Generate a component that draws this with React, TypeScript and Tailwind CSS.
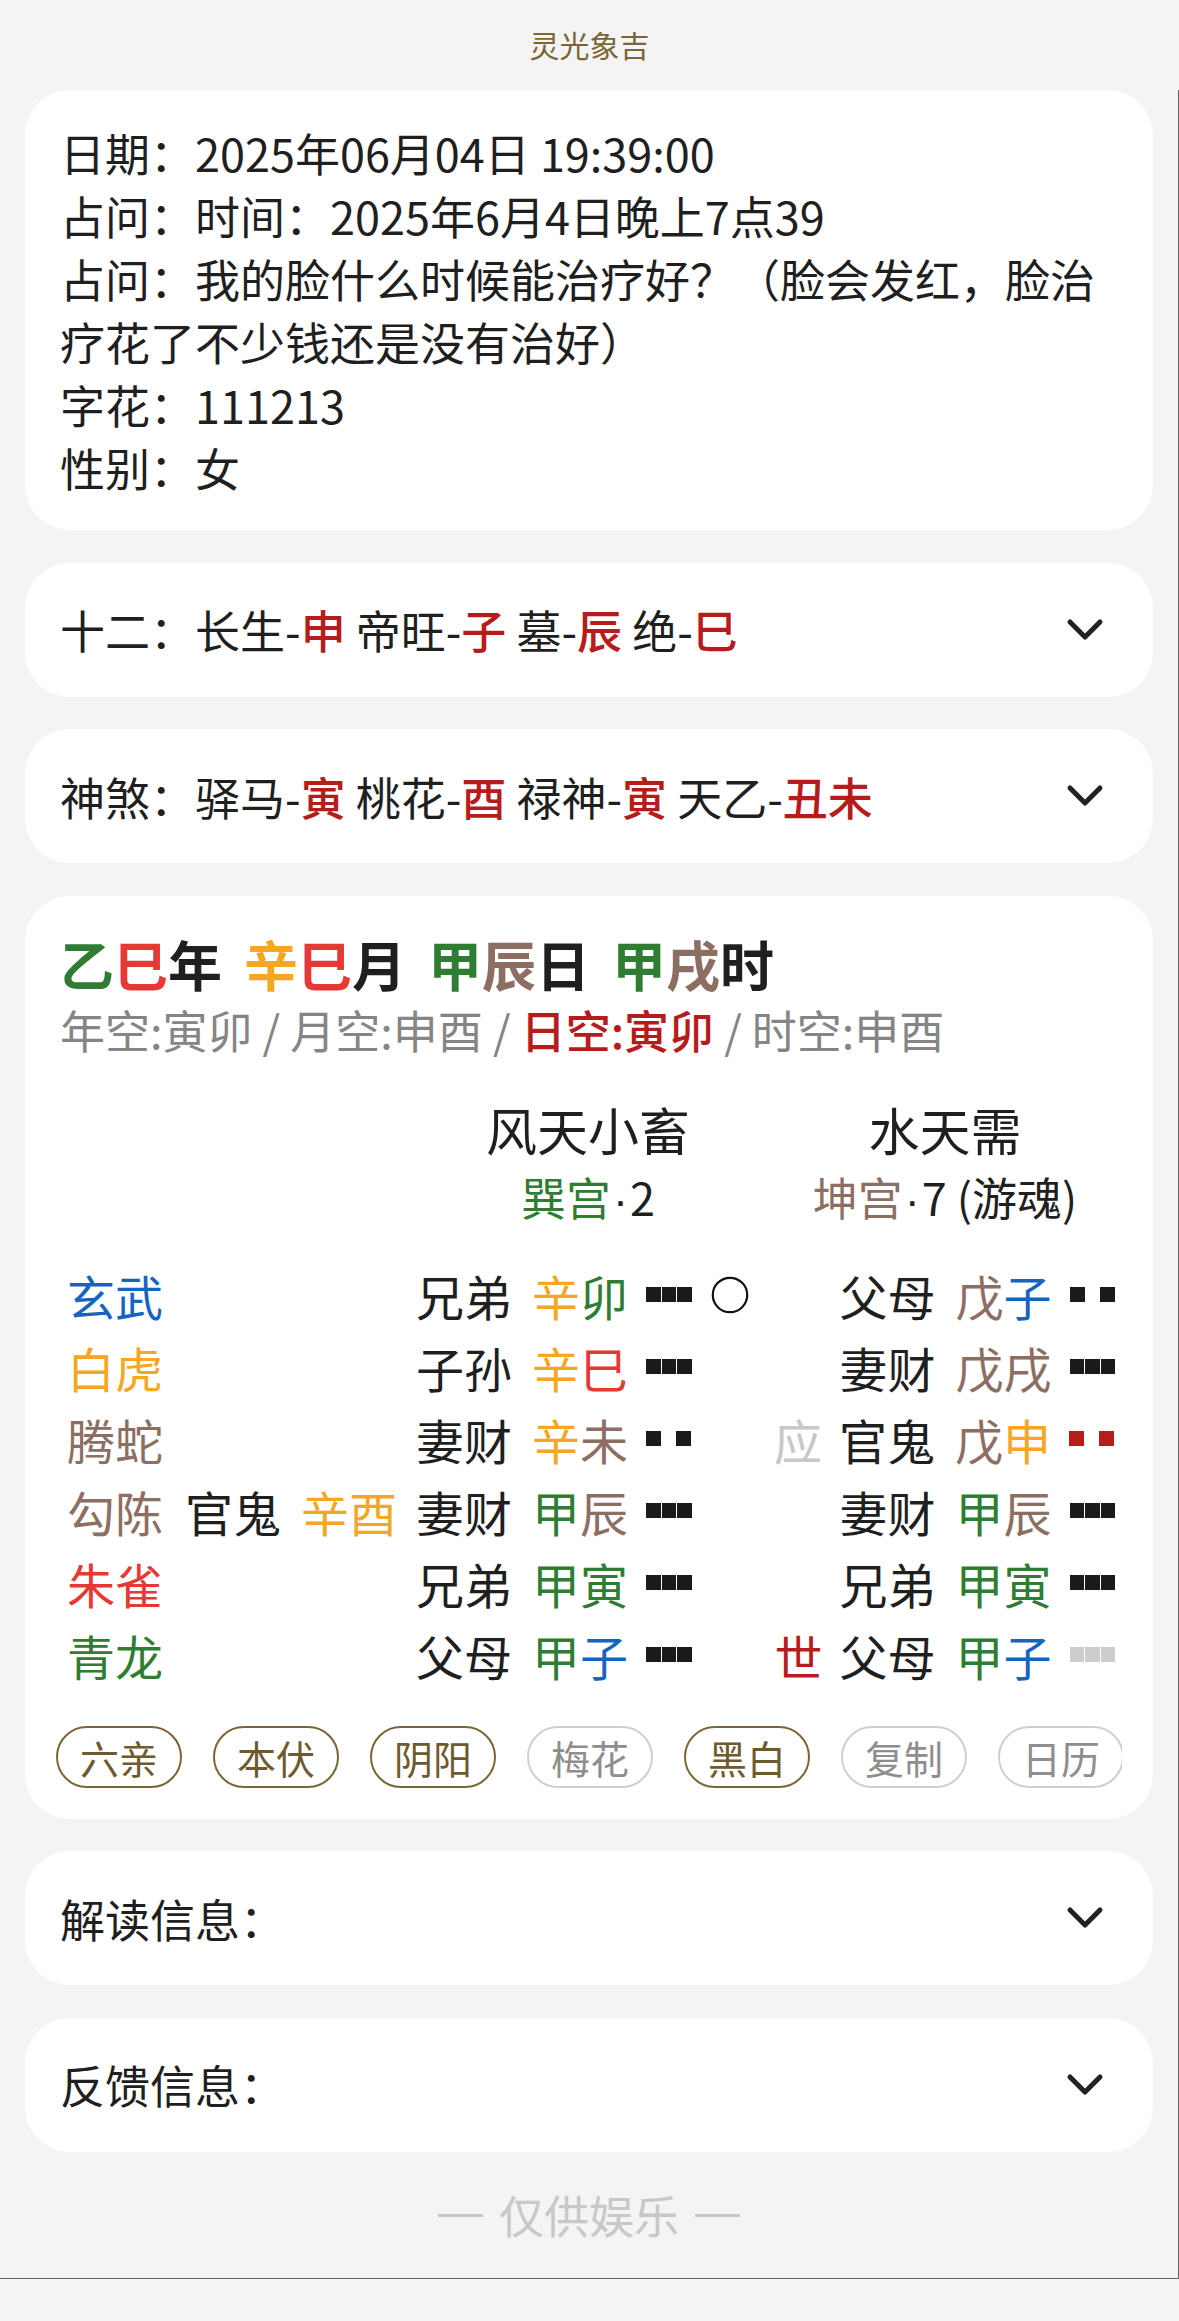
import React from "react";

const GREEN = "text-[#2e7d32]";
const RED = "text-[#e53935]";
const DRED = "text-[#b71c1c]";
const ORANGE = "text-[#f5a623]";
const BROWN = "text-[#8d6e63]";
const BLUE = "text-[#1565c0]";
const BLACK = "text-[#1f1f1f]";
const LGRAY = "text-[#c8c8c8]";

type Ch = [string, string];

function Chevron() {
  return (
    <svg width="38" height="24" viewBox="0 0 38 24" className="mr-[14px] shrink-0">
      <path d="M4 4 L19 19 L34 4" fill="none" stroke="#222" strokeWidth="5" strokeLinecap="round" strokeLinejoin="round" />
    </svg>
  );
}

function Yao({ yang, color }: { yang: boolean; color: string }) {
  if (yang) {
    return (
      <span className="ml-[18px] flex gap-[1px] shrink-0">
        <span className={"w-[14.5px] h-[15px] " + color} />
        <span className={"w-[14.5px] h-[15px] " + color} />
        <span className={"w-[14.5px] h-[15px] " + color} />
      </span>
    );
  }
  return (
    <span className="ml-[18px] flex gap-[15px] shrink-0">
      <span className={"w-[15px] h-[15px] " + color} />
      <span className={"w-[15px] h-[15px] " + color} />
    </span>
  );
}

function Pair({ rel, gz }: { rel: string; gz: Ch[] }) {
  return (
    <span className="flex shrink-0">
      <span className="w-[96px] text-[#1f1f1f]">{rel}</span>
      <span className="ml-[20px] w-[96px] flex">
        {gz.map((c, i) => (
          <span key={i} className={c[1]}>
            {c[0]}
          </span>
        ))}
      </span>
    </span>
  );
}

type Row = {
  god: string;
  godColor: string;
  fu?: { rel: string; gz: Ch[] };
  main: { rel: string; gz: Ch[]; yang: boolean; color: string };
  moving?: boolean;
  sy?: { t: string; c: string };
  bian: { rel: string; gz: Ch[]; yang: boolean; color: string };
};

const YB = "bg-[#1a1a1a]";
const YR = "bg-[#b71c1c]";
const YG = "bg-[#cccccc]";

const rows: Row[] = [
  {
    god: "玄武",
    godColor: BLUE,
    main: { rel: "兄弟", gz: [["辛", ORANGE], ["卯", GREEN]], yang: true, color: YB },
    moving: true,
    bian: { rel: "父母", gz: [["戊", BROWN], ["子", BLUE]], yang: false, color: YB },
  },
  {
    god: "白虎",
    godColor: ORANGE,
    main: { rel: "子孙", gz: [["辛", ORANGE], ["巳", RED]], yang: true, color: YB },
    bian: { rel: "妻财", gz: [["戊", BROWN], ["戌", BROWN]], yang: true, color: YB },
  },
  {
    god: "腾蛇",
    godColor: BROWN,
    main: { rel: "妻财", gz: [["辛", ORANGE], ["未", BROWN]], yang: false, color: YB },
    sy: { t: "应", c: LGRAY },
    bian: { rel: "官鬼", gz: [["戊", BROWN], ["申", ORANGE]], yang: false, color: YR },
  },
  {
    god: "勾陈",
    godColor: BROWN,
    fu: { rel: "官鬼", gz: [["辛", ORANGE], ["酉", ORANGE]] },
    main: { rel: "妻财", gz: [["甲", GREEN], ["辰", BROWN]], yang: true, color: YB },
    bian: { rel: "妻财", gz: [["甲", GREEN], ["辰", BROWN]], yang: true, color: YB },
  },
  {
    god: "朱雀",
    godColor: RED,
    main: { rel: "兄弟", gz: [["甲", GREEN], ["寅", GREEN]], yang: true, color: YB },
    bian: { rel: "兄弟", gz: [["甲", GREEN], ["寅", GREEN]], yang: true, color: YB },
  },
  {
    god: "青龙",
    godColor: GREEN,
    main: { rel: "父母", gz: [["甲", GREEN], ["子", BLUE]], yang: true, color: YB },
    sy: { t: "世", c: DRED },
    bian: { rel: "父母", gz: [["甲", GREEN], ["子", BLUE]], yang: true, color: YG },
  },
];

const buttons: { t: string; active: boolean }[] = [
  { t: "六亲", active: true },
  { t: "本伏", active: true },
  { t: "阴阳", active: true },
  { t: "梅花", active: false },
  { t: "黑白", active: true },
  { t: "复制", active: false },
  { t: "日历", active: false },
];

function CollapseCard({ children }: { children: React.ReactNode }) {
  return (
    <div className="bg-white rounded-[45px] h-[134px] pl-[35px] pr-[35px] flex items-center justify-between">
      <div className="text-[45px] leading-[63px] text-[#1f1f1f] whitespace-nowrap">{children}</div>
      <Chevron />
    </div>
  );
}

function R({ children }: { children: React.ReactNode }) {
  return <span className="text-[#b71c1c] font-medium">{children}</span>;
}

export default function App() {
  return (
    <div className="w-[1179px] min-h-[2321px] bg-[#f4f4f4] font-['Noto_Sans_CJK_SC',sans-serif] text-[#1f1f1f]">
      <div className="h-[90px] pt-[26px] text-center text-[30px] leading-[36px] text-[#7b6535]">灵光象吉</div>
      <div className="border-r border-b border-[#666666]">
        <div className="px-[25px] flex flex-col gap-[32.5px]">
          {/* Card 1 */}
          <div className="bg-white rounded-[45px] pt-[31px] pb-[31px] pl-[35px] pr-[35px] text-[45px] leading-[63px] text-[#1f1f1f]">
            <div>日期：2025年06月04日 19:39:00</div>
            <div>占问：时间：2025年6月4日晚上7点39</div>
            <div>占问：我的脸什么时候能治疗好？（脸会发红，脸治疗花了不少钱还是没有治好）</div>
            <div>字花：111213</div>
            <div>性别：女</div>
          </div>

          <CollapseCard>
            十二：长生-<R>申</R> 帝旺-<R>子</R> 墓-<R>辰</R> 绝-<R>巳</R>
          </CollapseCard>

          <CollapseCard>
            神煞：驿马-<R>寅</R> 桃花-<R>酉</R> 禄神-<R>寅</R> 天乙-<R>丑未</R>
          </CollapseCard>

          {/* Card 4 */}
          <div className="bg-white rounded-[45px] pt-[34px] pb-[31px] pl-[35px] pr-[35px]">
            <div className="flex gap-[22px] text-[54px] leading-[68px] font-bold whitespace-nowrap">
              <span>
                <span className={GREEN}>乙</span>
                <span className={RED}>巳</span>
                <span className={BLACK}>年</span>
              </span>
              <span>
                <span className={ORANGE}>辛</span>
                <span className={RED}>巳</span>
                <span className={BLACK}>月</span>
              </span>
              <span>
                <span className={GREEN}>甲</span>
                <span className={BROWN}>辰</span>
                <span className={BLACK}>日</span>
              </span>
              <span>
                <span className={GREEN}>甲</span>
                <span className={BROWN}>戌</span>
                <span className={BLACK}>时</span>
              </span>
            </div>
            <div className="text-[45px] leading-[64px] text-[#858585] whitespace-nowrap">
              年空:寅卯 / 月空:申酉 / <span className="text-[#b71c1c] font-medium">日空:寅卯</span> / 时空:申酉
            </div>

            <div className="mt-[37px] flex text-[51px] leading-[60px] text-[#1f1f1f]">
              <div className="w-[356px] shrink-0" />
              <div className="w-[344px] shrink-0 text-center">风天小畜</div>
              <div className="ml-[15px] w-[340px] shrink-0 text-center">水天需</div>
            </div>
            <div className="mt-[11px] flex text-[45px] leading-[54px] text-[#1f1f1f]">
              <div className="w-[356px] shrink-0" />
              <div className="w-[344px] shrink-0 text-center">
                <span className={GREEN}>巽宫</span>
                <span className="font-['Liberation_Sans',sans-serif] px-[2px]">·</span>2
              </div>
              <div className="ml-[15px] w-[340px] shrink-0 text-center">
                <span className={BROWN}>坤宫</span>
                <span className="font-['Liberation_Sans',sans-serif] px-[2px]">·</span>7 (游魂)
              </div>
            </div>

            <div className="mt-[31px] flex flex-col">
              {rows.map((r, i) => (
                <div key={i} className="flex items-center h-[72px] text-[48px] leading-[72px] whitespace-nowrap">
                  <div className="w-[125px] pl-[7px] shrink-0">
                    <span className={r.godColor}>{r.god}</span>
                  </div>
                  <div className="w-[231px] shrink-0 flex">{r.fu && <Pair rel={r.fu.rel} gz={r.fu.gz} />}</div>
                  <Pair rel={r.main.rel} gz={r.main.gz} />
                  <Yao yang={r.main.yang} color={r.main.color} />
                  <div className="ml-[19px] w-[38px] h-[38px] shrink-0 flex items-center justify-center">
                    {r.moving && (
                      <svg width="38" height="38" viewBox="0 0 38 38">
                        <circle cx="19" cy="19" r="17.2" fill="none" stroke="#111" strokeWidth="2.2" />
                      </svg>
                    )}
                  </div>
                  <div className="ml-[26px] w-[48px] shrink-0">
                    {r.sy && <span className={r.sy.c}>{r.sy.t}</span>}
                  </div>
                  <div className="ml-[17px] flex items-center">
                    <Pair rel={r.bian.rel} gz={r.bian.gz} />
                    <Yao yang={r.bian.yang} color={r.bian.color} />
                  </div>
                </div>
              ))}
            </div>

            <div className="mt-[35px] -mx-[4px] overflow-hidden">
              <div className="flex gap-[31px]">
                {buttons.map((b) =>
                  b.active ? (
                    <div
                      key={b.t}
                      className="w-[126px] h-[62px] shrink-0 rounded-full border-[2.5px] border-[#7b6535] text-[#6e5a2e] text-[39px] leading-[56px] flex items-center justify-center"
                    >
                      {b.t}
                    </div>
                  ) : (
                    <div
                      key={b.t}
                      className="w-[126px] h-[62px] shrink-0 rounded-full border-[2.5px] border-[#cfcfcf] text-[#8e8e8e] text-[39px] leading-[56px] flex items-center justify-center"
                    >
                      {b.t}
                    </div>
                  )
                )}
              </div>
            </div>
          </div>

          <CollapseCard>解读信息：</CollapseCard>
          <CollapseCard>反馈信息：</CollapseCard>
        </div>
        <div className="pt-[38.5px] pb-[38px] flex items-center justify-center gap-[16px] text-[45px] leading-[50px] text-[#c8c8c8]">
          <span className="w-[45px] h-[3px] bg-[#c8c8c8]" />
          <span>仅供娱乐</span>
          <span className="w-[45px] h-[3px] bg-[#c8c8c8]" />
        </div>
      </div>
    </div>
  );
}
